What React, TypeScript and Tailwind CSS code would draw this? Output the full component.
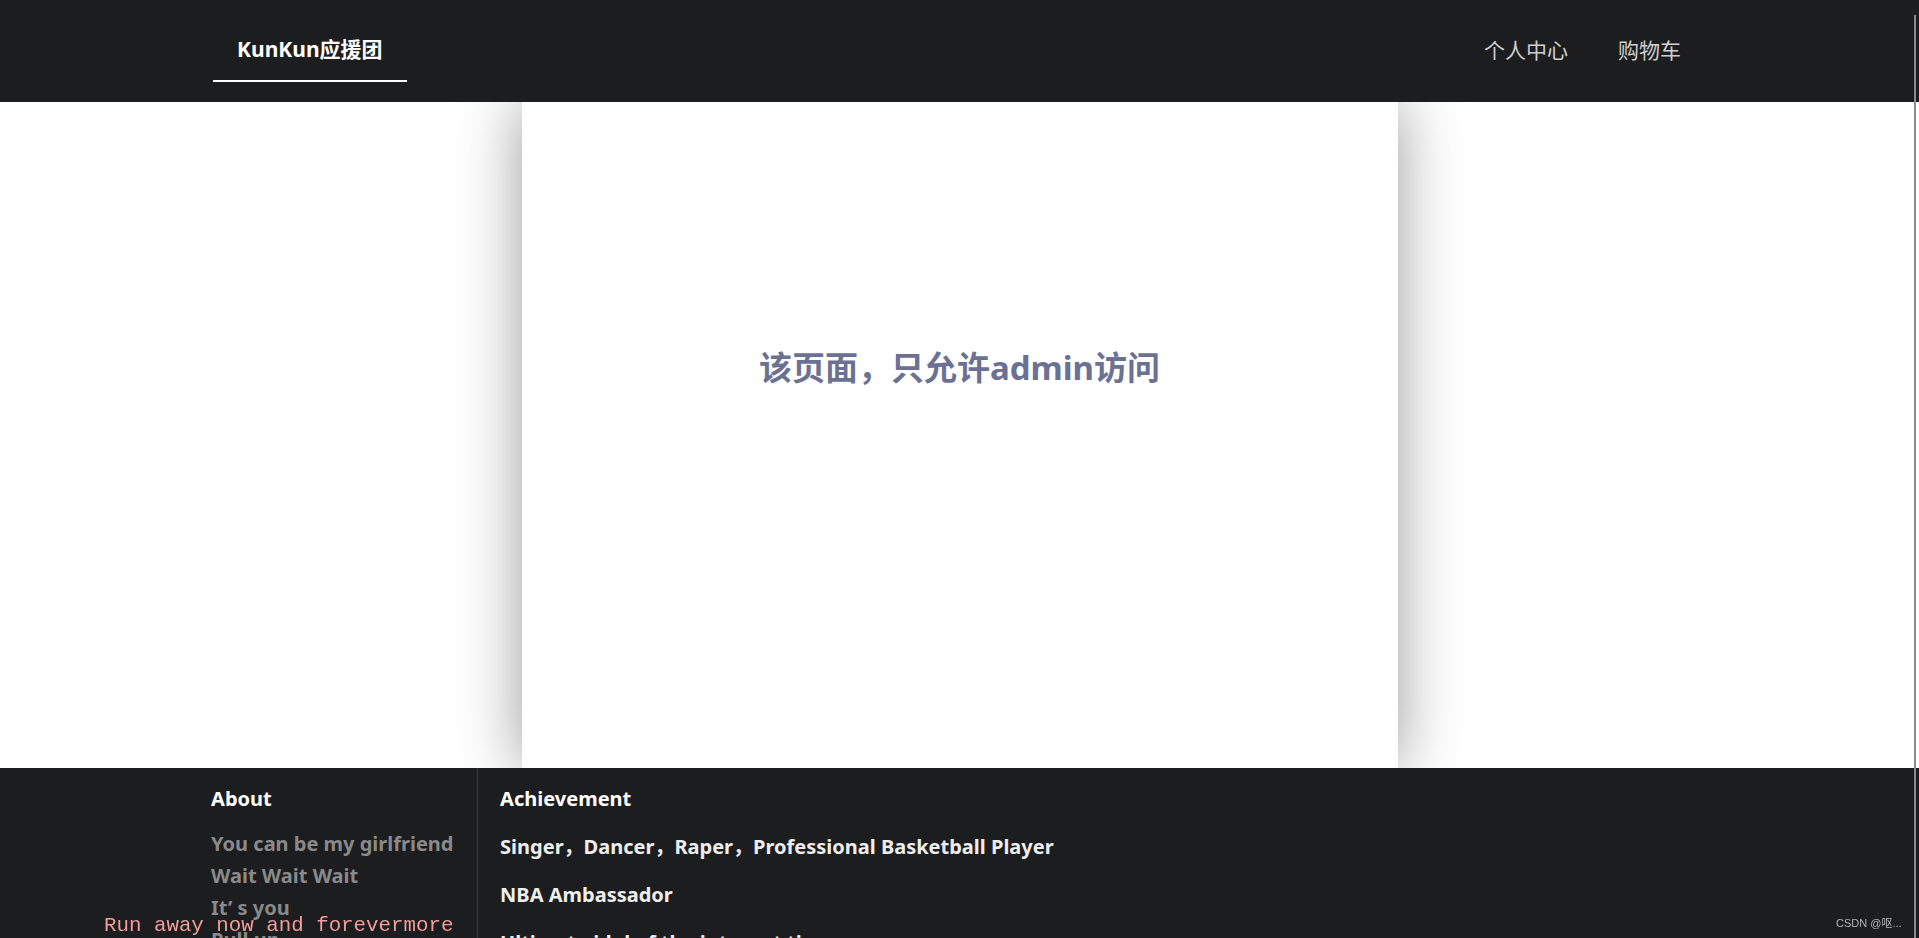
import React from "react";

export default function App() {
  const font = "font-['Noto_Sans','Noto_Sans_CJK_SC',sans-serif]";
  return (
    <div className={`min-h-screen bg-white ${font}`}>
      <header className="relative z-10 h-[102px] bg-[#1c1d1f]">
        <div className="mx-auto flex h-full w-[78%] items-start justify-between pl-[2px]">
          <a className="mt-[20px] flex h-[62px] items-center border-b-2 border-white px-6 text-[21px] font-bold text-white">
            KunKun应援团
          </a>
          <nav className="flex h-full items-center pr-[2px]">
            <a className="px-[25px] text-[21px] text-[#cfcfcf]">个人中心</a>
            <a className="px-[25px] text-[21px] text-[#cfcfcf]">购物车</a>
          </nav>
        </div>
      </header>

      <main className="relative z-0">
        <div className="mx-auto h-[666px] w-[876px] bg-white pt-[245px] shadow-[0_0_60px_rgba(0,0,0,0.4)]">
          <h1 className="text-center text-[33px] font-bold leading-[42px] text-[#6b7192]">
            该页面，只允许admin访问
          </h1>
        </div>
      </main>

      <footer className="relative z-10 bg-[#1c1d1f]">
        <div className="mx-auto flex w-[78%] pb-10">
          <div className="w-[267px] shrink-0 border-r border-[#3a3b3d] pt-[18px]">
            <div className="text-[20px] font-bold leading-[26px] text-white">About</div>
            <div className="mt-[16px] text-[20px] font-bold leading-[32px] text-[#8a8a8a]">
              <div>You can be my girlfriend</div>
              <div>Wait Wait Wait</div>
              <div>It’ s you</div>
              <div>Pull up</div>
              <div>Hey, baby</div>
            </div>
          </div>
          <div className="pl-[22px] pt-[18px]">
            <div className="text-[20px] font-bold leading-[26px] text-white">Achievement</div>
            <div className="mt-[22px] text-[20px] font-bold leading-[26px] text-[#eeeeee]">
              Singer，Dancer，Raper，Professional Basketball Player
            </div>
            <div className="mt-[22px] text-[20px] font-bold leading-[26px] text-[#eeeeee]">
              NBA Ambassador
            </div>
            <div className="mt-[22px] text-[20px] font-bold leading-[26px] text-[#eeeeee]">
              Ultimate idol of the internet times
            </div>
          </div>
        </div>
      </footer>

      <div className="fixed left-[104px] top-[913px] z-20 font-['Liberation_Mono',monospace] text-[20.8px] leading-[26px] text-[#f29c9c]">
        Run away now and forevermore
      </div>
      <div className="fixed left-[1836px] top-[915px] z-20 font-['Liberation_Sans','Noto_Sans_CJK_SC',sans-serif] text-[11px] text-[#b5b5b5]">
        CSDN @呕...
      </div>
      <div className="fixed right-[3px] top-[15px] bottom-0 z-30 w-[2px] bg-[#8c8c8c]" />
    </div>
  );
}
